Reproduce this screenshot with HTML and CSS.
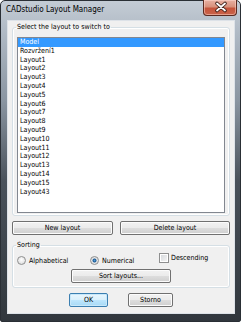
FILE: index.html
```html
<html>
<head>
    <link rel="stylesheet" href="styles.css">
</head>
<body>
    <div class="window">
        <div class="titlebar">
            <span class="title">CADstudio Layout Manager</span>
            <button class="close">
                <svg width="34" height="15" viewBox="0 0 34 15">
                    <path d="M13 3.5 L21 10.5 M21 3.5 L13 10.5" stroke="#3a1d16" stroke-width="3.6" stroke-linecap="round"/>
                    <path d="M13 3.5 L21 10.5 M21 3.5 L13 10.5" stroke="#ffffff" stroke-width="1.8" stroke-linecap="round"/>
                </svg>
            </button>
        </div>
        <div class="client">
            <fieldset class="group group-list">
                <legend>Select the layout to switch to</legend>
                <ul class="listbox">
                    <li class="selected">Model</li>
                    <li>Rozvržení1</li>
                    <li>Layout1</li>
                    <li>Layout2</li>
                    <li>Layout3</li>
                    <li>Layout4</li>
                    <li>Layout5</li>
                    <li>Layout6</li>
                    <li>Layout7</li>
                    <li>Layout8</li>
                    <li>Layout9</li>
                    <li>Layout10</li>
                    <li>Layout11</li>
                    <li>Layout12</li>
                    <li>Layout13</li>
                    <li>Layout14</li>
                    <li>Layout15</li>
                    <li>Layout43</li>
                </ul>
            </fieldset>
            <div class="layout-buttons">
                <button class="btn btn-new">New layout</button>
                <button class="btn btn-delete">Delete layout</button>
            </div>
            <fieldset class="group group-sort">
                <legend>Sorting</legend>
                <div class="options">
                    <label class="option opt-alpha"><span class="radio"></span>Alphabetical</label>
                    <label class="option opt-num"><span class="radio checked"></span>Numerical</label>
                    <label class="option opt-desc"><span class="check"></span>Descending</label>
                </div>
                <button class="btn btn-sort">Sort layouts...</button>
            </fieldset>
            <div class="dialog-buttons">
                <button class="btn btn-default">OK</button>
                <button class="btn btn-storno">Storno</button>
            </div>
        </div>
    </div>
</body>
</html>
```

FILE: styles.css
```css
body {
    margin: 0;
    font-family: "DejaVu Sans Condensed", "Liberation Sans", Arial, sans-serif;
    font-size: 7.05px;
    color: #000;
}

.window {
    box-sizing: border-box;
    width: 241px;
    height: 322px;
    display: flex;
    flex-direction: column;
    padding: 0 6px 8px 7px;
    border: 1px solid #2a2f35;
    border-radius: 5px 5px 2px 2px;
    background: linear-gradient(to bottom, #c4ccd5 0, #b0bac5 30px, #8a95a1 100px, #4a525b 180px, #31373d 100%);
}

.titlebar {
    height: 20px;
    display: flex;
    justify-content: space-between;
    align-items: flex-start;
}

.title {
    margin: 4px 0 0 -2px;
    font-size: 8px;
    line-height: 10px;
}

.close {
    width: 34px;
    height: 16px;
    margin: -1px -3px 0 0;
    padding: 0;
    border: 1px solid #5b2a20;
    border-top: none;
    border-radius: 0 0 4px 4px;
    background: linear-gradient(to bottom, #e8b1a3 0, #d8917c 45%, #c5553c 55%, #c9634a 100%);
    box-shadow: inset 0 0 0 1px rgba(255, 220, 210, 0.5);
}

.close svg {
    display: block;
}

.client {
    flex: 1;
    background: #f0f0f0;
    box-shadow: 0 0 0 1px #dde2e8;
}

.group {
    margin: 0 4px 0 4px;
    padding: 5px 4px 2px 4px;
    border: 1px solid #d5dfe5;
    border-radius: 3px;
    box-shadow: inset 0 0 0 1px #fff;
    min-inline-size: 0;
}

.group legend {
    padding: 0 1px;
    margin-left: -1px;
    line-height: 10px;
}

.group-list {
    margin-top: 1px;
}

.listbox {
    box-sizing: border-box;
    height: 176px;
    margin: 0;
    padding: 0;
    list-style: none;
    border: 1px solid #828790;
    background: #fff;
    overflow: hidden;
}

.listbox li {
    height: 8.8px;
    line-height: 8.8px;
    padding-left: 2px;
}

.listbox li.selected {
    background: #3399ff;
    color: #fff;
}

.btn {
    box-sizing: border-box;
    height: 14px;
    padding: 0;
    font-family: "DejaVu Sans Condensed", "Liberation Sans", Arial, sans-serif;
    font-size: 7.05px;
    line-height: 12px;
    color: #000;
    border: 1px solid #707070;
    border-radius: 2px;
    background: linear-gradient(to bottom, #f2f2f2 0, #ebebeb 50%, #dddddd 51%, #cfcfcf 100%);
    box-shadow: inset 0 0 0 1px #fcfcfc;
}

.btn-default {
    border-color: #3c7fb1;
    background: linear-gradient(to bottom, #eaf6fd 0, #d9f0fc 50%, #bee6fd 51%, #a7d9f5 100%);
    box-shadow: inset 0 0 0 1px #c8e8fa;
}

.layout-buttons {
    display: flex;
    margin: 5px 0 0 4px;
    gap: 7px;
}

.btn-new {
    width: 101px;
}

.btn-delete {
    width: 110px;
}

.group-sort {
    margin-top: 5px;
    padding: 4px 4px 4px 4px;
}

.options {
    display: flex;
    align-items: center;
    height: 12px;
}

.option {
    display: flex;
    align-items: center;
    gap: 3px;
}

.opt-alpha {
    width: 73px;
}

.opt-num {
    width: 69px;
}

.opt-desc {
    gap: 2px;
    margin-bottom: 5px;
}

.radio {
    box-sizing: border-box;
    width: 9px;
    height: 9px;
    border: 1px solid #8e8f8f;
    border-radius: 50%;
    background: radial-gradient(circle at 50% 40%, #ffffff 0, #e6e6e6 60%, #cfcfcf 100%);
}

.radio.checked {
    background: radial-gradient(circle, #4f9ad8 0, #1c5a93 1.6px, #e8e8e8 2.4px, #d4d4d4 100%);
}

.check {
    box-sizing: border-box;
    width: 10px;
    height: 10px;
    border: 1px solid #8e8f8f;
    background: linear-gradient(to bottom right, #d3d6da, #f7f7f7);
    box-shadow: inset 0 0 0 1px #fff;
}

.btn-sort {
    display: block;
    width: 100px;
    margin: 3px 0 0 54px;
}

.dialog-buttons {
    display: flex;
    margin: 5px 0 0 61px;
    gap: 20px;
}

.btn-default {
    width: 39px;
}

.btn-storno {
    width: 45px;
}
```
